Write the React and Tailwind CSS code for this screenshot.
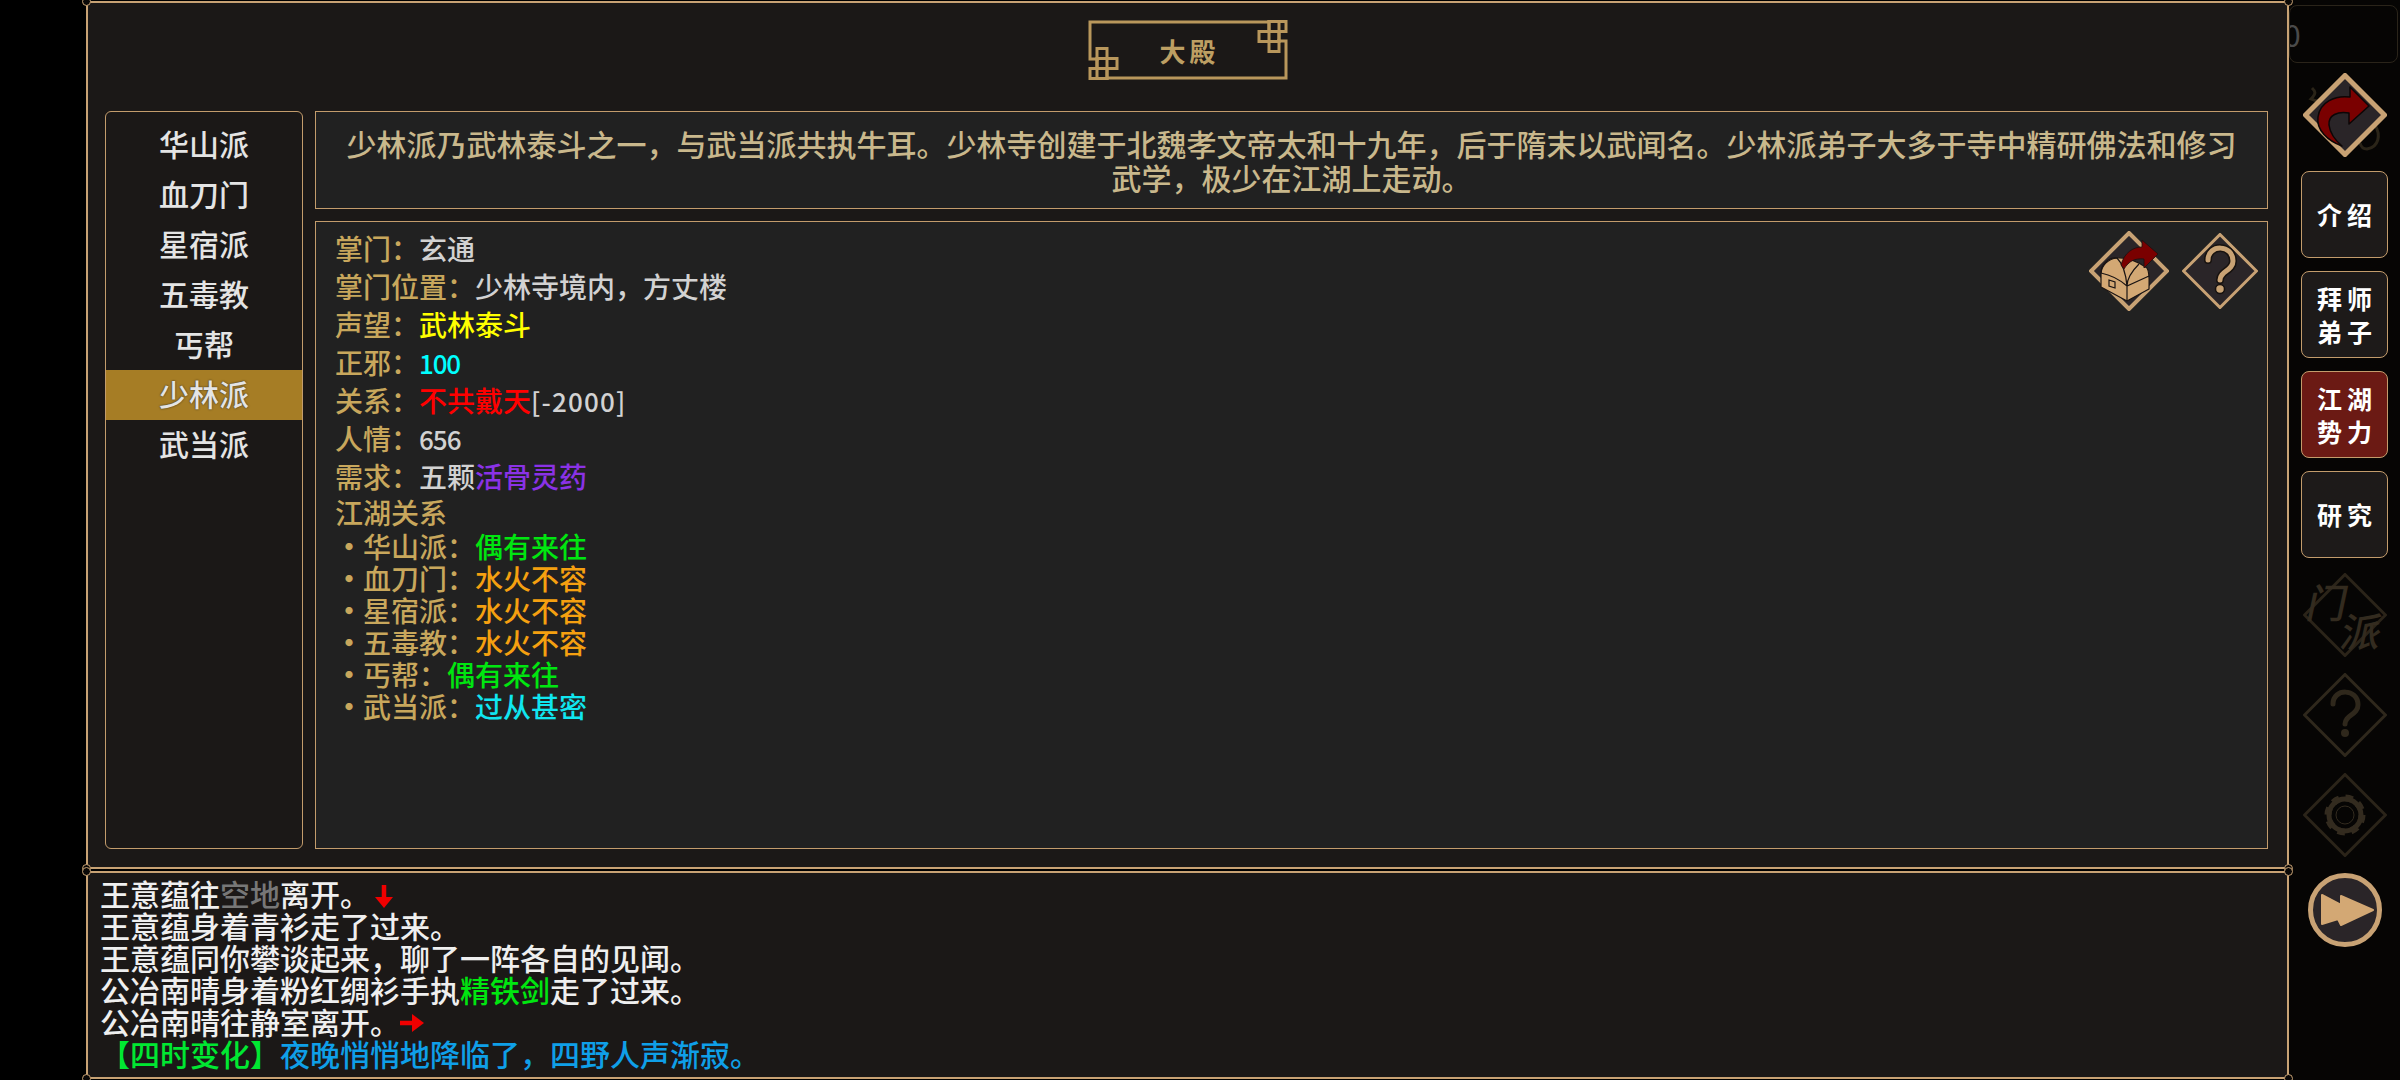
const F = "font-['Noto_Sans_CJK_SC',sans-serif]";

const factions = ['华山派', '血刀门', '星宿派', '五毒教', '丐帮', '少林派', '武当派'];
const relations = [
  ['华山派', '偶有来往', 'text-[#00e610]'],
  ['血刀门', '水火不容', 'text-[#f5a010]'],
  ['星宿派', '水火不容', 'text-[#f5a010]'],
  ['五毒教', '水火不容', 'text-[#f5a010]'],
  ['丐帮', '偶有来往', 'text-[#00e610]'],
  ['武当派', '过从甚密', 'text-[#10e6f0]'],
];

function Corners() {
  const c = 'absolute size-[9px] rounded-full border border-[#c8a274] bg-[#0a0807]';
  return (
    <>
      <i className={`${c} -left-[6px] -top-[6px]`} />
      <i className={`${c} -right-[6px] -top-[6px]`} />
      <i className={`${c} -left-[6px] -bottom-[6px]`} />
      <i className={`${c} -right-[6px] -bottom-[6px]`} />
    </>
  );
}

function Plaque() {
  return (
    <div className="relative flex h-[60px] w-[200px] items-center justify-center">
      <svg className="absolute inset-0" width="200" height="60" viewBox="0 0 200 60" fill="none" stroke="#b9975c" strokeWidth="3">
        <path d="M181 2H2V39H11" />
        <path d="M19 58H198V21H189" />
        <rect x="181" y="1.5" width="17" height="10" />
        <rect x="171" y="11.5" width="20" height="10" />
        <rect x="181" y="1.5" width="10" height="30" />
        <rect x="2" y="48.5" width="17" height="10" />
        <rect x="9" y="38.5" width="20" height="10" />
        <rect x="9" y="28.5" width="10" height="30" />
      </svg>
      <span className="relative pl-[4px] text-[26px] font-bold tracking-[4px] text-[#bd9f63]">大殿</span>
    </div>
  );
}

function Diamond({ size = 84, stroke = '#c8a274', fill = '#2a2528', sw = 4, children }) {
  const c = size / 2;
  const r = c - sw / 2;
  return (
    <svg width={size} height={size} viewBox={`0 0 ${size} ${size}`} className="block">
      <path d={`M${c} ${c - r}L${c + r} ${c}L${c} ${c + r}L${c - r} ${c}Z`} fill={fill} stroke={stroke} strokeWidth={sw} />
      {children}
    </svg>
  );
}

function ChestIcon() {
  return (
    <Diamond size={80} sw={4} fill="#2a2528">
      <path d="M12 42C12 33 20 26 28 27C38 26 50 31 58 37C61 42 60 50 60 58L38 70L12 56Z" fill="#d3a874" stroke="#1a1413" strokeWidth="1.2" strokeLinejoin="round" />
      <path d="M12 42C22 44 30 48 38 55L60 45M38 55V70M38 55C38 46 44 39 50 33M12 42C13 34 19 28 28 27C34 33 37 44 38 55" fill="none" stroke="#1a1413" strokeWidth="1.2" />
      <path d="M20 49L26 51V57L20 55Z" fill="#d3a874" stroke="#1a1413" strokeWidth="1.2" />
      <path d="M32 34C35 22 44 16 53 16V9L69 23L55 37V28C46 27 40 30 35 38Z" fill="#7a0000" stroke="#1a1010" strokeWidth="0.8" />
    </Diamond>
  );
}

function Question({ stroke, size = 76, sw = 3, dim }) {
  const c = size / 2;
  const p = `M${c - 12} ${c - 11}C${c - 12} ${c - 27} ${c + 13} ${c - 27} ${c + 13} ${c - 10}C${c + 13} ${c} ${c} ${c} ${c} ${c + 9}`;
  return (
    <Diamond size={size} stroke={stroke} sw={sw} fill={dim ? 'none' : '#2a2528'}>
      {!dim && <path d={p} fill="none" stroke="#17120f" strokeWidth="8" strokeLinecap="round" />}
      <path d={p} fill="none" stroke={stroke} strokeWidth="5" strokeLinecap="round" />
      {!dim && <circle cx={c} cy={c + 18} r="4.5" fill={stroke} stroke="#17120f" strokeWidth="1.5" />}
      {dim && <circle cx={c} cy={c + 18} r="4" fill={stroke} />}
    </Diamond>
  );
}

function ReturnIcon() {
  return (
    <svg width="84" height="84" viewBox="0 0 84 84" className="block">
      <path d="M9 15C12 18 14 20 8 26C14 29 20 28 24 24" fill="none" stroke="#2a2418" strokeWidth="3" />
      <path d="M72 52C78 62 76 74 64 76C60 76 58 74 57 70" fill="none" stroke="#2a2418" strokeWidth="3" />
      <path d="M42 2.5L81.5 42L42 81.5L2.5 42Z" fill="#2a2528" stroke="#c8a274" strokeWidth="5" />
      <path d="M47 14L66 33L46 51V40C35 38 25 42 26 52C27 60 32 67 39 73C25 68 13 57 15 44C17 29 32 22 47 24Z" fill="#7a0000" stroke="#0c0606" strokeWidth="1.5" strokeLinejoin="round" />
    </svg>
  );
}

function Tab({ lines, active }) {
  return (
    <div className={`flex h-[87px] w-[87px] flex-col items-center justify-center rounded-[8px] border border-[#c39c6c] ${active ? 'bg-[#6b1a14]' : 'bg-[#1d1a19]'}`}>
      {lines.map((l) => (
        <span key={l} className="pl-[5px] text-[25px] font-bold leading-[33px] tracking-[5px] text-white">{l}</span>
      ))}
    </div>
  );
}

function Row({ label, children }) {
  return (
    <div className="h-[38px] font-medium leading-[38px] text-[#d2d2d2]">
      <span className="text-[#c8a75c]">{label}：</span>
      {children}
    </div>
  );
}

function LogArrowDown() {
  return (
    <svg width="18" height="24" viewBox="0 0 18 24" className="ml-[5px] inline-block align-[-3px]">
      <path d="M9 0V16" stroke="#f00000" strokeWidth="4.5" />
      <path d="M0 12H18L9 23Z" fill="#f00000" />
    </svg>
  );
}

function LogArrowRight() {
  return (
    <svg width="24" height="18" viewBox="0 0 24 18" className="inline-block align-[2px]">
      <path d="M0 9H16" stroke="#f00000" strokeWidth="4.5" />
      <path d="M12 0V18L24 9Z" fill="#f00000" />
    </svg>
  );
}

export default function App() {
  return (
    <div className={`flex h-[1080px] w-[2400px] overflow-hidden bg-black pl-[86px] ${F}`}>
      <div className="flex w-[2203px] flex-col pt-[1px]">
        <div className="relative flex h-[868px] flex-col border-2 border-[#c8a274] bg-[#1b1817] px-[17px] pt-[17px]">
          <Corners />
          <div className="flex h-[91px] justify-center">
            <Plaque />
          </div>
          <div className="flex h-[738px] gap-[12px]">
            <div className="w-[198px] rounded-[6px] border border-[#c39c6c] py-[8px]">
              {factions.map((f) => (
                <div key={f} className={`flex h-[50px] items-center justify-center pb-[4px] text-[30px] font-medium text-[#e4e4e4] ${f === '少林派' ? 'bg-[#a67d25] [text-shadow:0_0_2px_#222]' : ''}`}>
                  {f}
                </div>
              ))}
            </div>
            <div className="flex w-[1953px] flex-col gap-[12px]">
              <div className="flex h-[98px] items-center justify-center border border-[#c39c6c] bg-[#212121] px-[28px] text-center text-[30px] font-medium leading-[34px] text-[#c9b88c]">
                少林派乃武林泰斗之一，与武当派共执牛耳。少林寺创建于北魏孝文帝太和十九年，后于隋末以武闻名。少林派弟子大多于寺中精研佛法和修习武学，极少在江湖上走动。
              </div>
              <div className="flex h-[628px] items-start justify-between border border-[#c39c6c] bg-[#212121] pl-[19px] pr-[9px] pt-[7px] text-[28px]">
                <div>
                  <Row label="掌门">玄通</Row>
                  <Row label="掌门位置">少林寺境内，方丈楼</Row>
                  <Row label="声望"><span className="text-[#ffff00]">武林泰斗</span></Row>
                  <Row label="正邪"><span className="text-[26px] tracking-[-1.2px] text-[#00ffff]">100</span></Row>
                  <Row label="关系"><span className="text-[#ff0000]">不共戴天</span><span className="text-[26px] tracking-[1.2px]">[-2000]</span></Row>
                  <Row label="人情"><span className="text-[26px] tracking-[-1px]">656</span></Row>
                  <Row label="需求">五颗<span className="text-[#8a32e6]">活骨灵药</span></Row>
                  <div className="h-[35px] font-medium leading-[35px] text-[#c8a75c]">江湖关系</div>
                  {relations.map(([n, v, c]) => (
                    <div key={n} className="flex h-[32px] font-medium leading-[32px] text-[#c8a75c]">
                      <span className="w-[28px] font-bold">·</span>
                      <span>{n}：</span>
                      <span className={c}>{v}</span>
                    </div>
                  ))}
                </div>
                <div className="mt-[2px] flex items-center gap-[13px]">
                  <ChestIcon />
                  <Question stroke="#c8a274" />
                </div>
              </div>
            </div>
          </div>
        </div>
        <div className="relative mt-[2px] h-[208px] border-2 border-[#c8a274] bg-[#1b1817] px-[12px] pt-[4px] text-[30px] font-medium leading-[32px] text-[#efefef]">
          <Corners />
          <div>王意蕴往<span className="text-[#777777]">空地</span>离开。<LogArrowDown /></div>
          <div>王意蕴身着青衫走了过来。</div>
          <div>王意蕴同你攀谈起来，聊了一阵各自的见闻。</div>
          <div>公冶南晴身着粉红绸衫手执<span className="text-[#00e610]">精铁剑</span>走了过来。</div>
          <div>公冶南晴往静室离开。<LogArrowRight /></div>
          <div><span className="text-[#00e832]">【四时变化】</span><span className="text-[#0f9fe8]">夜晚悄悄地降临了，四野人声渐寂。</span></div>
        </div>
      </div>

      <div className="flex w-[111px] flex-col items-center bg-[#060504]">
        <div className="mt-[5px] flex h-[58px] w-[109px] items-center self-start overflow-hidden rounded-[8px] border border-[#2a241a] text-[30px] leading-none text-[#4a4a4a]">
          <span className="-ml-[6px]">0</span>
        </div>
        <div className="mt-[10px]"><ReturnIcon /></div>
        <div className="mt-[14px] flex flex-col gap-[13px]">
          <Tab lines={['介绍']} />
          <Tab lines={['拜师', '弟子']} />
          <Tab lines={['江湖', '势力']} active />
          <Tab lines={['研究']} />
        </div>
        <div className="relative mt-[15px] size-[84px]">
          <Diamond size={84} stroke="#2b2419" fill="none" sw={3} />
          <span className="absolute left-[5px] top-[8px] -skew-x-12 text-[40px] font-medium leading-none text-[#332b1f]">门</span>
          <span className="absolute left-[39px] top-[37px] -skew-x-12 text-[40px] font-medium leading-none text-[#332b1f]">派</span>
        </div>
        <div className="mt-[16px]"><Question stroke="#2f281c" size={84} sw={3} dim /></div>
        <div className="mt-[16px]">
          <Diamond size={84} stroke="#2b2419" fill="none" sw={3}>
            <circle cx="42" cy="42" r="17" fill="none" stroke="#332b1f" strokeWidth="7" strokeDasharray="7 6.35" />
            <circle cx="42" cy="42" r="16" fill="none" stroke="#332b1f" strokeWidth="5" />
            <circle cx="42" cy="42" r="9" fill="none" stroke="#332b1f" strokeWidth="1" />
          </Diamond>
        </div>
        <div className="mt-[16px]">
          <svg width="74" height="74" viewBox="0 0 74 74" className="block">
            <circle cx="37" cy="37" r="34.5" fill="#2a2528" stroke="#c8a274" strokeWidth="5" />
            <path d="M14 22L33 32V23L65 37L33 52L30 46L14 51Z" fill="#d3a874" stroke="#d3a874" strokeWidth="2" strokeLinejoin="round" />
          </svg>
        </div>
      </div>
    </div>
  );
}
